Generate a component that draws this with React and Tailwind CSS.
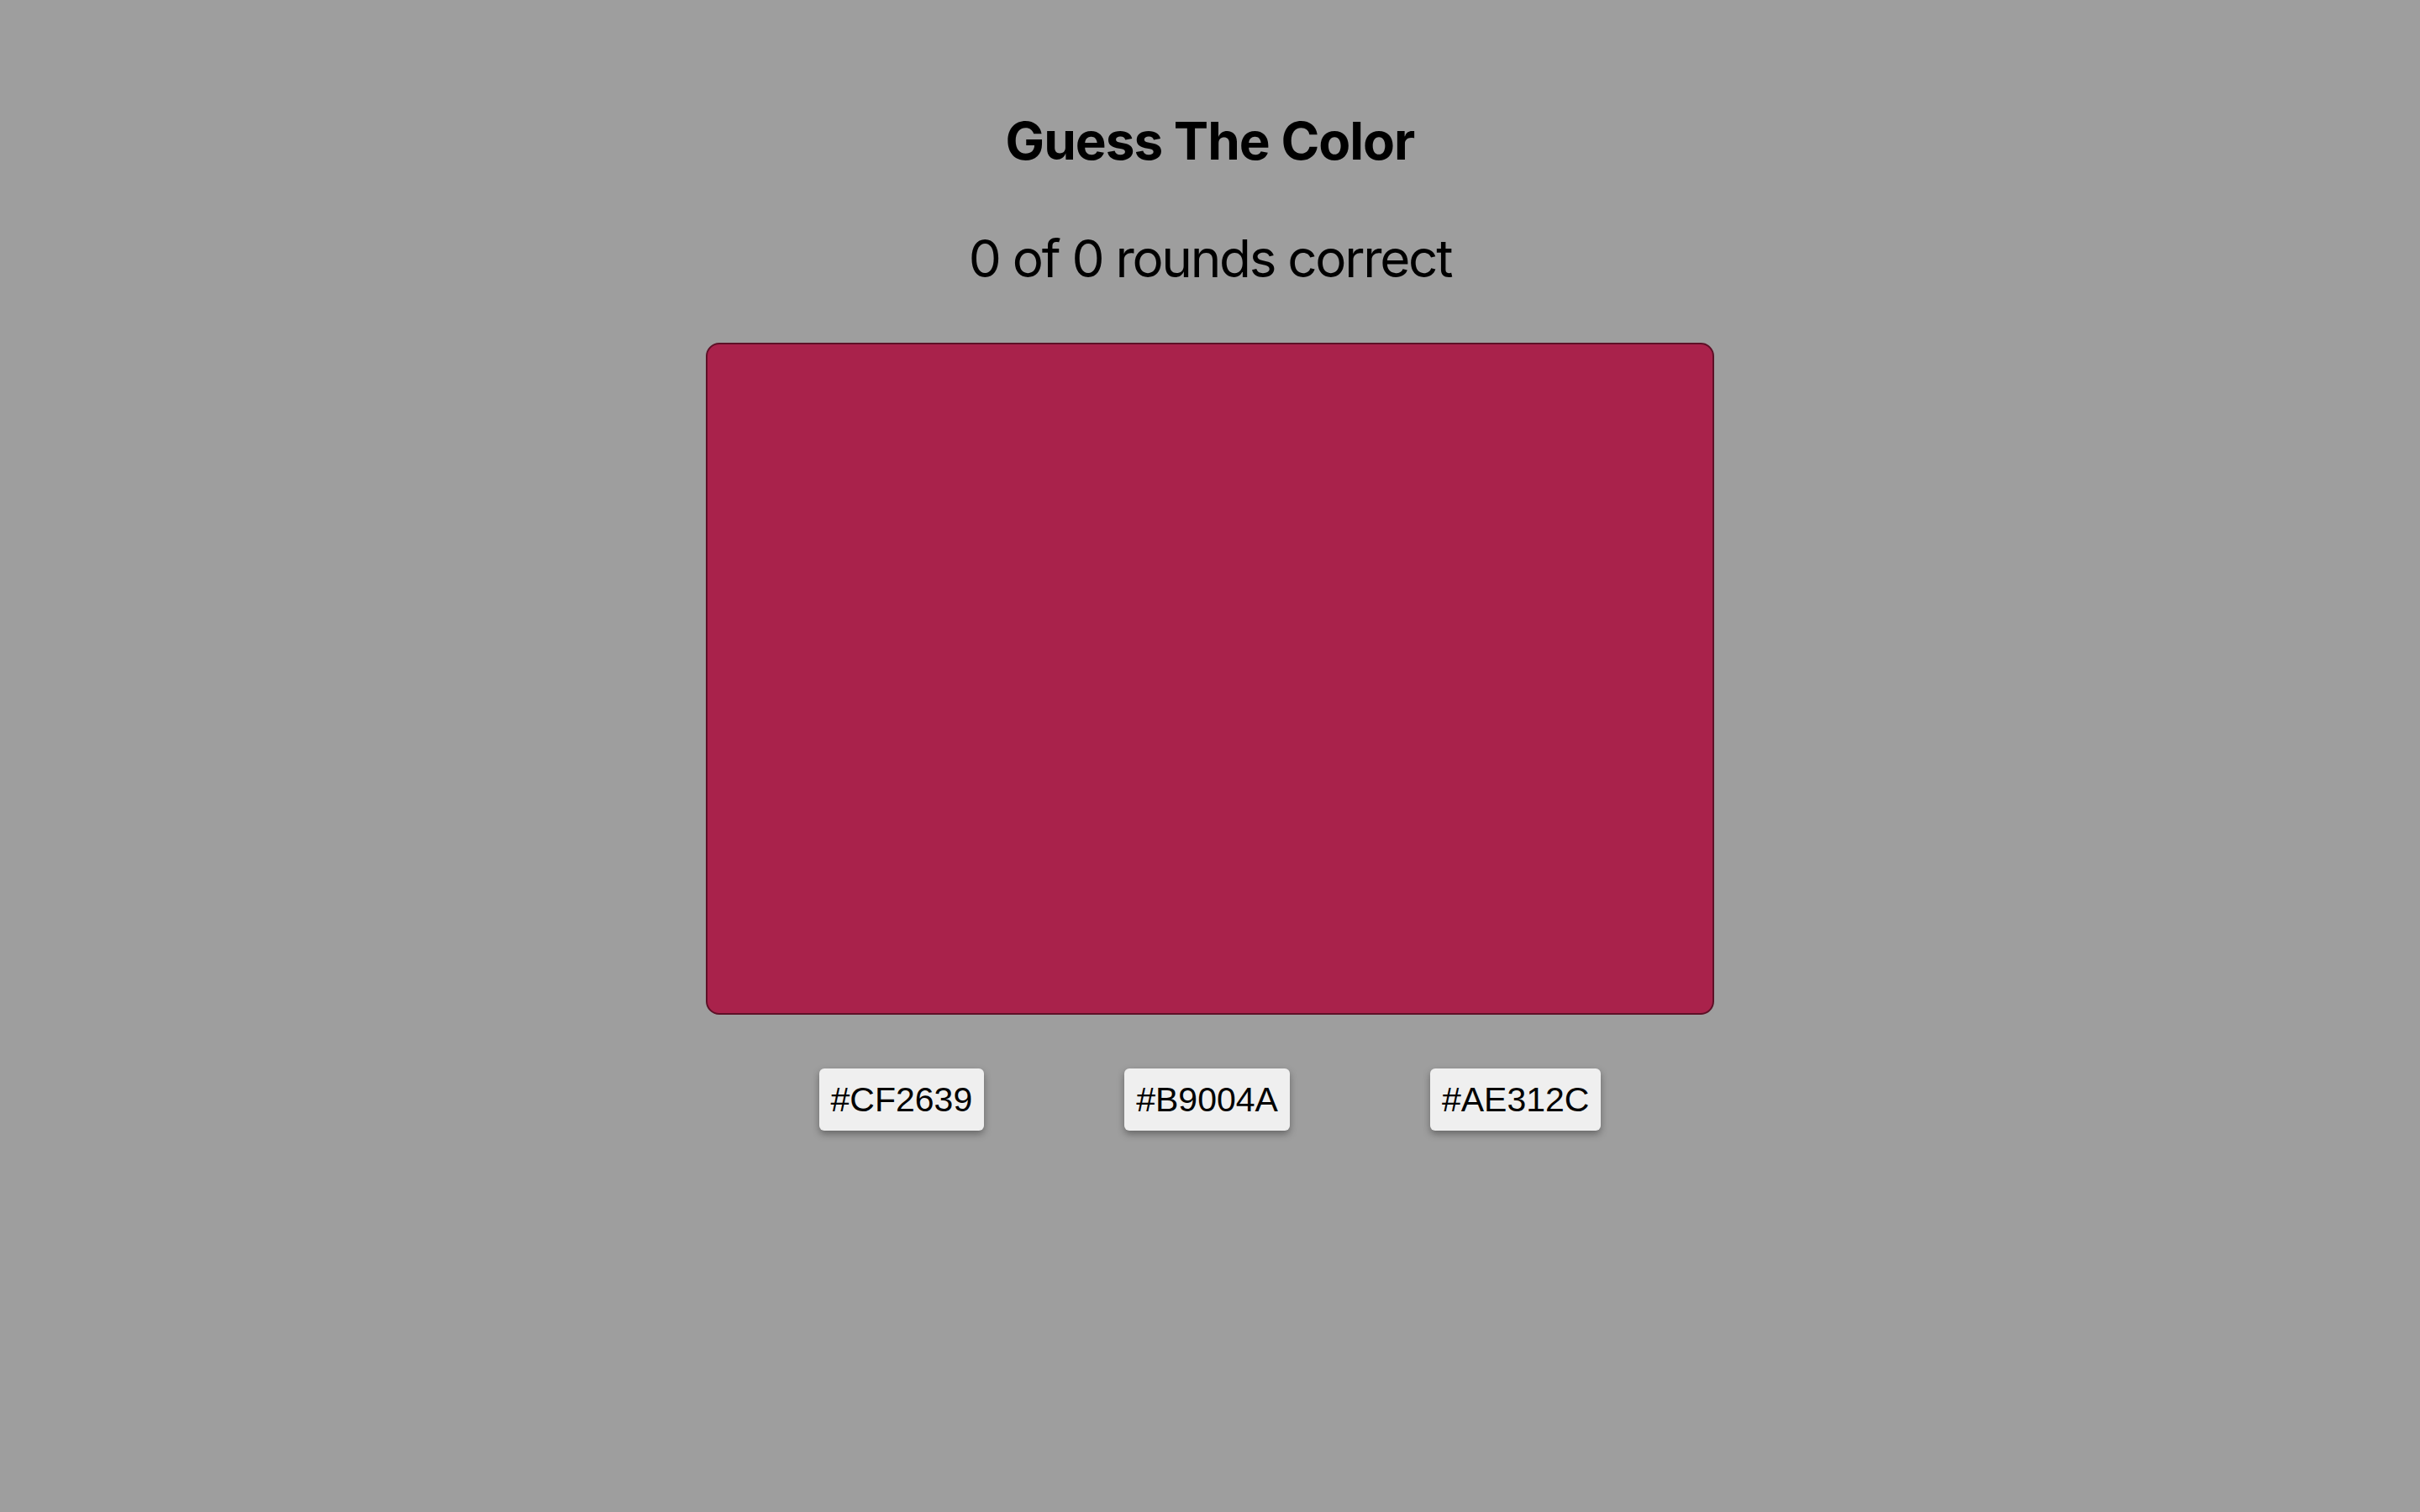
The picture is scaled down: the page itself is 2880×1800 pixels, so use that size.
import React, { useState } from 'react'

const OPTIONS = ['#CF2639', '#B9004A', '#AE312C']

const App = () => {
  const [correct] = useState(0)
  const [rounds] = useState(0)

  return (
    <div className="min-h-screen w-full bg-[#9e9e9e] flex flex-col items-center pt-[137px] text-black">
      <h1 className="text-[62px] leading-[62px] font-bold tracking-[-1px] font-['Inter',sans-serif]">Guess The Color</h1>
      <p className="mt-[78px] text-[62px] leading-[62px] tracking-[-2.3px] font-['Inter',sans-serif]">
        {correct} of {rounds} rounds correct
      </p>

      <div className="mt-[69px] w-[1200px] h-[800px] rounded-[16px] border-2 border-[#5e1027] bg-[#a9224b]" />

      <div className="mt-[64px] flex justify-center gap-[167px]">
        {OPTIONS.map(c => (
          <button
            key={c}
            className="h-[74px] px-[14px] rounded-[6px] bg-[#efefef] text-[41px] leading-none font-['Liberation_Sans',Arial,sans-serif] shadow-[0_4px_8px_rgba(0,0,0,0.35)]"
          >
            {c}
          </button>
        ))}
      </div>
    </div>
  )
}

export default App
